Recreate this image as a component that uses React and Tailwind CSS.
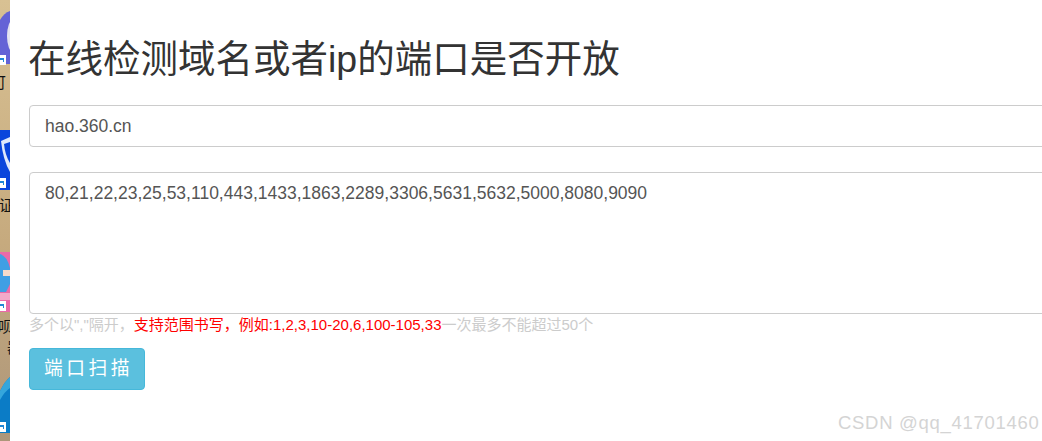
import React from 'react'

const sans = 'font-["Liberation_Sans","Noto_Sans_CJK_SC",sans-serif]'

// shortcut arrow badge on the desktop icons
const Badge = ({ y }) => (
  <g>
    <rect y={y} width="6" height="10" fill="#fff" />
    <path d={`M0 ${y + 3} H4 V${y + 7} H3 V${y + 5} H0 Z`} fill="#1f86d6" />
  </g>
)

// sliver of the desktop that shows to the left of the browser window
const DesktopStrip = () => (
  <svg className="w-[10px] h-[441px] shrink-0" viewBox="0 0 10 441">
    <defs>
      <linearGradient id="wall" x1="0" y1="0" x2="0" y2="1">
        <stop offset="0" stopColor="#d8c193" />
        <stop offset="0.55" stopColor="#c6aa7e" />
        <stop offset="1" stopColor="#ad967a" />
      </linearGradient>
    </defs>
    <rect width="10" height="441" fill="url(#wall)" />

    <path d="M0 20 Q4 13 10 11 V64 H0 Z" fill="#6463d6" />
    <ellipse cx="13" cy="36" rx="6" ry="16" fill="#e4e4f0" />
    <Badge y={55} />
    <text x="-9" y="88" fontSize="15" fill="#111" fontFamily="Noto Sans CJK SC">可</text>

    <rect y="130" width="10" height="60" fill="#0a45dc" />
    <path d="M1 141 L10 137 V172 Q3 160 1 141 Z" fill="#dfe8fb" />
    <path d="M4 144 L10 142 V163 Q5 155 4 144 Z" fill="#0a45dc" />
    <Badge y={178} />
    <text x="-1" y="211" fontSize="15" fill="#111" fontFamily="Noto Sans CJK SC">证</text>

    <rect y="252" width="10" height="60" fill="#ea6aa8" />
    <path d="M0 254 Q7 256 10 268 V284 L6 292 H0 Z" fill="#3f9fe4" />
    <rect x="3" y="270" width="7" height="6" fill="#f5dacb" />
    <path d="M0 293 H10 V300 H0 Z" fill="#f3a9c9" />
    <Badge y={301} />
    <text x="-2" y="332" fontSize="15" fill="#111" fontFamily="Noto Sans CJK SC">呗</text>
    <text x="7" y="353" fontSize="15" fill="#222" fontFamily="Noto Sans CJK SC">器</text>

    <path d="M0 391 Q5 381 10 377 V433 H0 Z" fill="#0b7cc6" />
    <path d="M0 391 Q5 381 10 377 V388 Q5 391 0 400 Z" fill="#35a6dc" />
    <Badge y={422} />
  </svg>
)

const App = () => {
  return (
    <div className={`${sans} relative w-[1042px] h-[441px] overflow-hidden bg-white flex`}>
      <DesktopStrip />
      <div className="w-[1100px] shrink-0 pl-[19px]">
        <h1 className="mt-[36px] -ml-px text-[37.5px] leading-[46px] text-[#333]">在线检测域名或者ip的端口是否开放</h1>
        <input
          readOnly
          value="hao.360.cn"
          className="block mt-[23px] w-full h-[42px] px-[15px] border border-[#ccc] rounded-[4px] text-[17.5px] text-[#555] outline-none"
        />
        <textarea
          readOnly
          value="80,21,22,23,25,53,110,443,1433,1863,2289,3306,5631,5632,5000,8080,9090"
          className="block mt-[25px] w-full h-[142px] px-[15px] py-[8px] border border-[#ccc] rounded-[4px] text-[17.5px] leading-[24px] text-[#555] outline-none resize-none"
        />
        <p className="text-[15px] leading-[20px] text-[#ccc] mt-px">
          多个以","隔开，<span className="text-[#f00]">支持范围书写，例如:1,2,3,10-20,6,100-105,33</span>一次最多不能超过50个
        </p>
        <button className="block mt-[13px] h-[42px] w-[116px] pl-[14px] text-left whitespace-nowrap overflow-hidden rounded-[4px] bg-[#5bc0de] border border-[#46b8da] text-white text-[18.75px] tracking-[3.5px]">
          端口扫描
        </button>
      </div>
      {/* watermark sits on top of the page */}
      <span className="absolute left-[838px] top-[412px] text-[18.5px] leading-[22px] tracking-[0.7px] text-[#d4d4d4]">
        CSDN @qq_41701460
      </span>
    </div>
  )
}

export default App
